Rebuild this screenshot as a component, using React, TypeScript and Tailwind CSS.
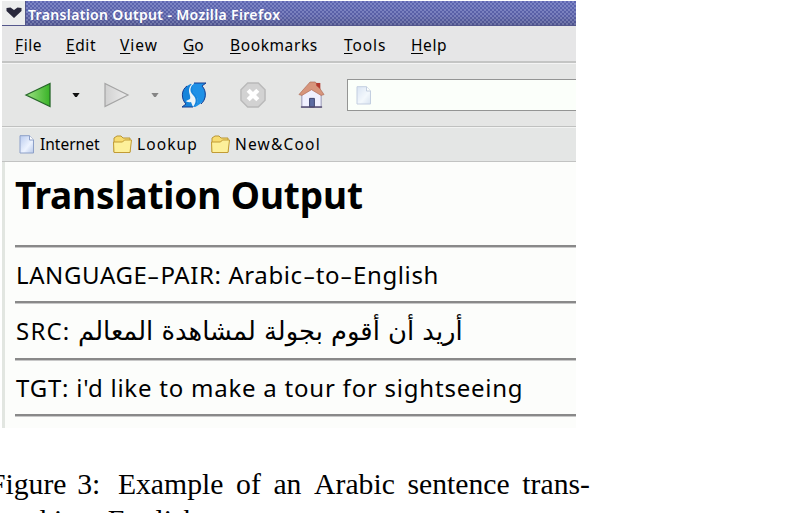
import type { ReactNode } from "react";

function Menu({ label, className }: { label: string; className: string }) {
  return (
    <span className={`whitespace-nowrap ${className}`}>
      <span className="underline decoration-1 underline-offset-2">{label[0]}</span>
      {label.slice(1)}
    </span>
  );
}

function Rule() {
  return <div className="h-[3px] shrink-0 border-t-2 border-b border-t-[#898989] border-b-[#c8c8c8]" />;
}

function Hyphen() {
  return <span className="inline-block w-[13px] origin-left scale-x-[1.6] tracking-normal">-</span>;
}

function Line({ children, className }: { children: ReactNode; className: string }) {
  return <div className={`flex shrink-0 items-center pl-px whitespace-nowrap text-[24px] leading-[32px] ${className}`}>{children}</div>;
}

function Folder() {
  return (
    <svg width="21" height="19" viewBox="0 0 21 19" className="shrink-0">
      <path d="M2 17V3l3-2h4l2 2h7v14z" fill="#f7dc70" stroke="#b99634" />
      <path d="M1.5 7h9l2-2h7l-1.5 12.5H2z" fill="#fdf09a" stroke="#c19b35" />
    </svg>
  );
}

function Page({ className }: { className: string }) {
  return (
    <svg width="16" height="19" viewBox="0 0 16 19" className={`shrink-0 ${className}`}>
      <defs>
        <linearGradient id="sheet" x1="0" y1="0" x2="1" y2="1">
          <stop offset="0" stopColor="#b9cbee" />
          <stop offset=".6" stopColor="#edf3ff" />
          <stop offset="1" stopColor="#b7c8e8" />
        </linearGradient>
      </defs>
      <path d="M1 .7h9.5l4 4.300V18H1z" fill="url(#sheet)" stroke="#8da0c8" />
      <path d="M10.500.7V5h4" fill="#fff" stroke="#8da0c8" />
    </svg>
  );
}

export default function App() {
  return (
    <main className="h-[513px] w-[785px] overflow-hidden bg-white pt-px text-black">
      <section className="ml-[2px] flex h-[427px] w-[574px] flex-col overflow-hidden bg-[#fcfdfb] font-['Noto_Sans','DejaVu_Sans',sans-serif]">
        <header className="flex h-[25px] shrink-0 border-b border-[#54578c]">
          <div className="flex w-[24px] items-center justify-center border-r border-[#53578a] bg-[#eceded]">
            <svg width="18" height="12" viewBox="0 0 18 12"><path d="M1.500 1l4-.5L9 3l3.500-2.500 4 .5v3L9 11 1.500 4z" fill="#29283c" /></svg>
          </div>
          <div className="flex flex-1 items-center bg-[repeating-conic-gradient(#ffffff26_0_25%,#25286a26_0_50%),linear-gradient(#6670bd,#6269b0_60%,#555b94)] bg-[size:4px_4px,100%_100%] pl-[2px] pt-[2px] text-[14px] font-semibold whitespace-nowrap text-white">
            <span className="tracking-[0.35px]">Translation Output - Mozilla Firefox</span>
          </div>
        </header>
        <nav className="flex h-[37px] shrink-0 items-center border-b-2 border-[#c4c5c4] bg-[#e6e6e7] pt-[5px] pl-[13px] text-[15.500px]">
          <Menu label="File" className="w-[51px] tracking-[0.6px]" />
          <Menu label="Edit" className="w-[54px] tracking-[0.6px]" />
          <Menu label="View" className="w-[63px] tracking-[1px]" />
          <Menu label="Go" className="w-[47px]" />
          <Menu label="Bookmarks" className="w-[114px] tracking-[0.6px]" />
          <Menu label="Tools" className="w-[67px] tracking-[0.9px]" />
          <Menu label="Help" className="tracking-[0.6px]" />
        </nav>
        <div className="flex h-[64px] shrink-0 items-center border-t border-b border-t-[#f4f4f4] border-b-[#c0c1c0] bg-[#e5e6e5] pl-[22px]">
          <svg width="28" height="28" viewBox="0 0 28 28" className="shrink-0">
            <defs><linearGradient id="back"><stop stopColor="#9ee183" /><stop offset="1" stopColor="#39b327" /></linearGradient></defs>
            <path d="M2 14L26 2.500v23z" fill="url(#back)" stroke="#27682a" strokeWidth="1.300" />
          </svg>
          <svg width="8" height="4" viewBox="0 0 9 5" className="ml-[20px] shrink-0"><path d="M0 0h9L5.500 5h-2z" fill="#111" /></svg>
          <svg width="28" height="28" viewBox="0 0 28 28" className="ml-[22px] shrink-0">
            <defs><linearGradient id="forward"><stop stopColor="#d1d1d1" /><stop offset="1" stopColor="#ededed" /></linearGradient></defs>
            <path d="M3 2.500L26 14 3 25.500z" fill="url(#forward)" stroke="#a4a4a4" strokeWidth="1.200" />
          </svg>
          <svg width="8" height="4" viewBox="0 0 9 5" className="ml-[21px] shrink-0"><path d="M0 0h9L5.500 5h-2z" fill="#858585" /></svg>
          <svg width="26" height="28" viewBox="0 0 26 28" className="ml-[22px] shrink-0">
            <path d="M9 2L13 5C11 9 12 11 15 14 19 19 16 25 13 26H1l4-3C0 18 0 9 4 5L1 2z" fill="#1684db" />
            <path d="M13 2h12l-4 3c5 5 5 14 0 18-2 2-4 3-8 3 4-4 5-7 2-11-4-4-5-8-2-13z" fill="#1e91e7" />
            <path d="M1 1h12L6 5c-2 2-4 4-5 8z" fill="#e5e6e5" />
            <path d="M25 15v12H13l6-4c3-2 5-4 6-8z" fill="#e5e6e5" />
            <path d="M13 2c-5 5-4 9-1 12 4 4 3 8 0 12l-2-5c-3 1-5-1-5-1l4-2c1-3-1-5-1-8 0-4 2-7 5-8z" fill="#edf4f7" />
            <path d="M13 2h12l-4 3M1 26h11M1 26l4-3C0 18 0 9 6 5M21 5c5 5 4 14-1 18" fill="none" stroke="#183e91" />
          </svg>
          <svg width="26" height="26" viewBox="0 0 27 27" className="ml-[33px] shrink-0">
            <path d="M8 1h11l7 7v11l-7 7H8l-7-7V8z" fill="#d2d2d2" stroke="#b9b9b9" strokeWidth="1.500" />
            <path d="M8.500 8.500l10 10m0-10l-10 10" stroke="#fff" strokeWidth="4.500" />
          </svg>
          <svg width="27" height="28" viewBox="0 0 28 29" className="ml-[32px] shrink-0">
            <path d="M19 2h4v10h-4z" fill="#b33a2f" />
            <path d="M4 14L14 6l10 8v13H4z" fill="#f0f0ff" stroke="#9694b4" />
            <path d="M1 14L12.500 1H18l9 13-3 1L14 9 4 15z" fill="#d7957c" stroke="#a7624d" strokeWidth=".6" />
            <path d="M19 2h4v6l-4-3z" fill="#b33a2f" />
            <path d="M12 18h5v9h-5z" fill="#5c6ba2" stroke="#3c426d" />
            <path d="M3 27h22" stroke="#534c70" strokeWidth="1.500" />
          </svg>
          <div className="ml-[22px] flex h-[32px] flex-1 items-center border border-r-0 border-[#949594] bg-[#fbfffa] pl-[8px]"><Page className="opacity-50" /></div>
        </div>
        <div className="flex h-[35px] shrink-0 items-center border-t border-b border-t-[#f2f3f2] border-b-[#c2c3c2] bg-[#e4e6e5] pl-[17px] text-[15.500px] whitespace-nowrap">
          <Page className="" /><span className="ml-[5px] w-[72px] pt-px">Internet</span>
          <Folder /><span className="ml-[4px] w-[73px] pt-px tracking-[1.1px]">Lookup</span>
          <Folder /><span className="ml-[4px] pt-px tracking-[1.2px]">New&amp;Cool</span>
        </div>
        <article className="flex flex-1 flex-col border-l-[3px] border-[#e2e6e1] pl-[10px]">
          <h1 className="h-[83px] shrink-0 pt-[8px] text-[37px] leading-[50px] font-bold tracking-[-0.12px] whitespace-nowrap">Translation Output</h1>
          <Rule />
          <Line className="h-[53px]"><span className="tracking-[0.6px]">LANGUAGE<Hyphen />PAIR: Arabic<Hyphen />to<Hyphen />English</span></Line>
          <Rule />
          <Line className="h-[54px]"><span className="w-[62px] tracking-[1.2px]">SRC:</span><span dir="rtl" lang="ar" className="font-['DejaVu_Sans',sans-serif] text-[25.800px]">أريد أن أقوم بجولة لمشاهدة المعالم</span></Line>
          <Rule />
          <Line className="h-[53px]"><span className="tracking-[0.77px]">TGT: i'd like to make a tour for sightseeing</span></Line>
          <Rule />
        </article>
      </section>
      <p className="mt-[38px] ml-[-11px] h-[80px] font-['Liberation_Serif',serif] text-[29.700px] leading-[36px] whitespace-nowrap">
        <span className="flex w-[601px] justify-between"><span>Figure</span><span className="-ml-[2px]">3:</span><span className="ml-[5px]">Example</span><span>of</span><span>an</span><span>Arabic</span><span>sentence</span><span>trans-</span></span>
        <span className="block">lated into English</span>
      </p>
    </main>
  );
}
